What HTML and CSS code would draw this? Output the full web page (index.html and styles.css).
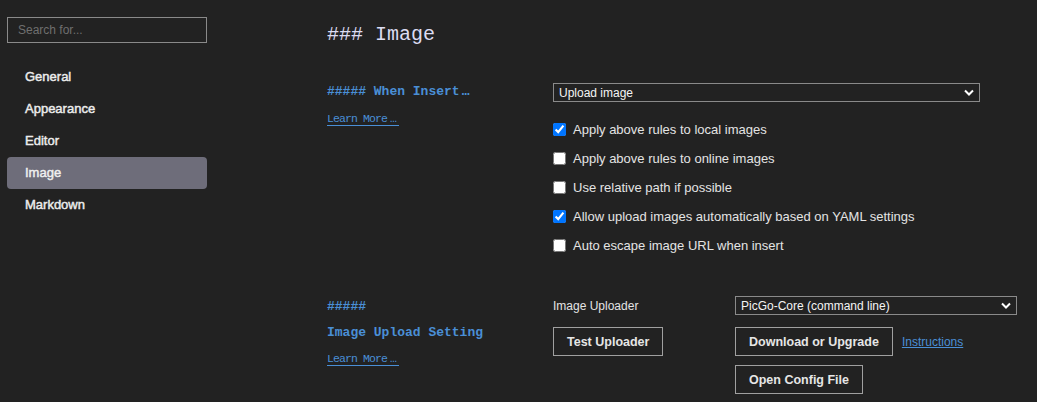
FILE: index.html
```html
<!DOCTYPE html>
<html>
<head>
<meta charset="utf-8">
<link rel="stylesheet" href="styles.css">
</head>
<body>
<div class="app">
  <aside class="sidebar">
    <input class="search" type="text" placeholder="Search for...">
    <nav class="nav">
      <div class="nav-item">General</div>
      <div class="nav-item">Appearance</div>
      <div class="nav-item">Editor</div>
      <div class="nav-item active">Image</div>
      <div class="nav-item">Markdown</div>
    </nav>
  </aside>
  <main class="main">
    <h3 class="title">### Image</h3>
    <section class="section first">
      <div class="side">
        <h5 class="sub">##### When Insert<span class="ell">…</span></h5>
        <a class="learn" href="#">Learn More<span class="ell">…</span></a>
      </div>
      <div class="body">
        <div class="select wide"><span>Upload image</span><svg class="chev" width="10" height="7" viewBox="0 0 10 7"><path d="M1 1.5 L5 5.5 L9 1.5" fill="none" stroke="#fff" stroke-width="2"/></svg></div>
        <div class="checks">
          <label class="check"><input type="checkbox" checked> Apply above rules to local images</label>
          <label class="check"><input type="checkbox"> Apply above rules to online images</label>
          <label class="check"><input type="checkbox"> Use relative path if possible</label>
          <label class="check"><input type="checkbox" checked> Allow upload images automatically based on YAML settings</label>
          <label class="check"><input type="checkbox"> Auto escape image URL when insert</label>
        </div>
      </div>
    </section>
    <section class="section second">
      <div class="side">
        <h5 class="sub">#####</h5>
        <h5 class="sub">Image Upload Setting</h5>
        <a class="learn" href="#">Learn More<span class="ell">…</span></a>
      </div>
      <div class="body uploader">
        <div class="label">Image Uploader</div>
        <div class="select narrow"><span>PicGo-Core (command line)</span><svg class="chev" width="10" height="7" viewBox="0 0 10 7"><path d="M1 1.5 L5 5.5 L9 1.5" fill="none" stroke="#fff" stroke-width="2"/></svg></div>
        <div class="cell"><button class="btn">Test Uploader</button></div>
        <div class="cell btn-row"><button class="btn">Download or Upgrade</button><a class="link" href="#">Instructions</a></div>
        <div class="cell last"></div>
        <div class="cell last"><button class="btn">Open Config File</button></div>
      </div>
    </section>
  </main>
</div>
</body>
</html>
```

FILE: styles.css
```css
html, body {
  margin: 0;
  padding: 0;
  background: #222222;
  color: #dddddd;
  font-family: "Liberation Sans", Arial, sans-serif;
  font-size: 13px;
}
.app {
  display: flex;
  height: 402px;
  overflow: hidden;
}
.sidebar {
  width: 200px;
  padding: 17px 0 0 7px;
  flex: none;
}
.search {
  box-sizing: border-box;
  display: block;
  width: 200px;
  height: 26px;
  margin: 0;
  background: #222222;
  border: 1px solid #8a8a8a;
  color: #ddd;
  padding: 0 10px;
  font-family: "Liberation Sans", Arial, sans-serif;
  font-size: 12px;
  outline: none;
}
.search::placeholder {
  color: #6f6f6f;
}
.nav {
  margin-top: 18px;
  display: flex;
  flex-direction: column;
}
.nav-item {
  height: 32px;
  line-height: 32px;
  padding-left: 18px;
  border-radius: 4px;
  color: #ececec;
  font-size: 13px;
  font-weight: normal;
  -webkit-text-stroke: 0.45px #ececec;
}
.nav-item.active {
  background: #6e6d7a;
  color: #f4f4f4;
}
.main {
  margin-left: 120px;
  flex: 1;
}
.title {
  margin: 0;
  padding-top: 20px;
  height: 30px;
  line-height: 30px;
  font-family: "Liberation Mono", "Courier New", monospace;
  font-weight: normal;
  font-size: 20px;
  color: #dcdcf2;
}
.section {
  display: grid;
  grid-template-columns: 226px auto;
}
.section.first {
  margin-top: 33px;
}
.section.second {
  margin-top: 36px;
}
.side {
  display: flex;
  flex-direction: column;
  align-items: flex-start;
}
.second .side {
  padding-top: 2px;
}
.sub {
  margin: 0;
  font-family: "Liberation Mono", "Courier New", monospace;
  font-weight: bold;
  font-size: 13px;
  color: #4a8fd6;
  height: 18px;
  line-height: 18px;
}
.second .sub + .sub {
  margin-top: 8px;
}
.ell {
  display: inline-block;
  width: 12px;
  text-align: center;
}
.learn {
  font-family: "Liberation Mono", "Courier New", monospace;
  font-size: 11.5px;
  letter-spacing: -0.9px;
  line-height: 12px;
  color: #4a8fd6;
  margin-top: 12px;
  text-decoration: none;
  border-bottom: 1px solid #4a8fd6;
}
.second .learn {
  margin-top: 11px;
}
.select {
  box-sizing: border-box;
  height: 19px;
  border: 1px solid #8a8a8a;
  display: flex;
  align-items: center;
  justify-content: space-between;
  padding: 0 5px 0 5px;
  color: #f4f4f4;
  font-size: 12px;
}
.select.wide {
  width: 427px;
}
.select.narrow {
  width: 282px;
}
.chev {
  flex: none;
}
.checks {
  margin-top: 13px;
  display: flex;
  flex-direction: column;
}
.check {
  height: 29px;
  display: flex;
  align-items: center;
  color: #e4e4e4;
  font-size: 13px;
}
.check input {
  width: 13px;
  height: 13px;
  margin: 0 7px 0 0;
  accent-color: #0075ff;
}
.uploader {
  display: grid;
  grid-template-columns: 182px auto;
  row-gap: 12px;
  align-items: center;
}
.uploader > .last {
  margin-top: -3px;
}
.label {
  font-size: 12px;
  color: #e4e4e4;
  padding-top: 1px;
}
.btn {
  box-sizing: border-box;
  height: 29px;
  padding: 0 13px;
  background: transparent;
  border: 1px solid #a0a0a0;
  color: #e6e6e6;
  font-family: "Liberation Sans", Arial, sans-serif;
  font-weight: bold;
  font-size: 12.5px;
  letter-spacing: 0;
}
.btn-row {
  display: flex;
  align-items: center;
  gap: 9px;
}
.link {
  color: #4a8fd6;
  font-size: 12px;
  text-decoration: underline;
}
```
